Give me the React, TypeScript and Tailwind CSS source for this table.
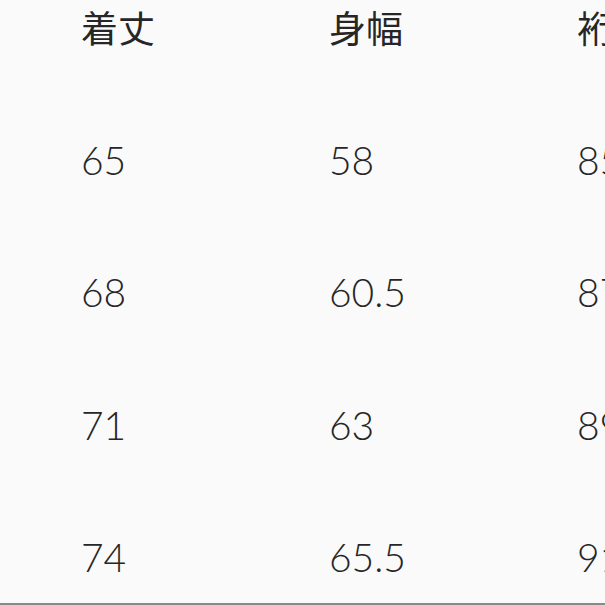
const HEAD = ["着丈", "身幅", "裄丈"];
const ROWS = [
  ["65", "58", "85"],
  ["68", "60.5", "87"],
  ["71", "63", "89"],
  ["74", "65.5", "91"],
];

export default function App() {
  return (
    <div
      className="h-[605px] w-[605px] overflow-hidden border-b-2 border-[#8a8a8a] bg-[#fafafa] text-[#262626]"
      style={{ fontFamily: '"Lato", "Noto Sans CJK JP", sans-serif' }}
    >
      <div className="pl-[81px]">
        <div className="mb-[38px] flex h-[56px] items-center">
          {HEAD.map((h) => (
            <div key={h} className="w-[248px] shrink-0 whitespace-nowrap text-[37px] leading-none">
              {h}
            </div>
          ))}
        </div>
        {ROWS.map((r, i) => (
          <div key={i} className="flex h-[132.5px] items-center">
            {r.map((v, j) => (
              <div key={j} className="w-[248px] shrink-0 whitespace-nowrap text-[39px] font-light leading-none">
                {v}
              </div>
            ))}
          </div>
        ))}
      </div>
    </div>
  );
}
